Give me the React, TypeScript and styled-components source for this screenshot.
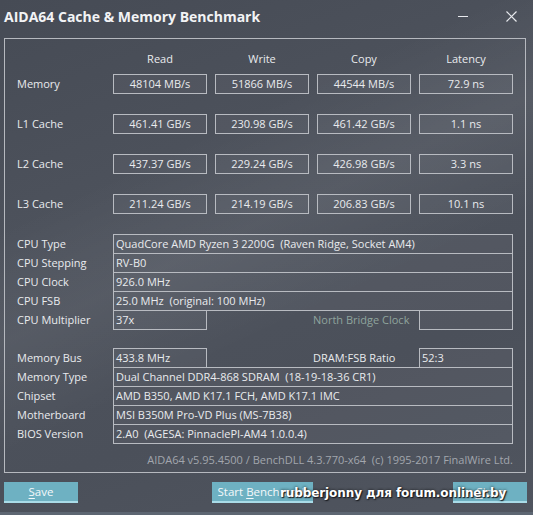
import styled, { createGlobalStyle } from 'styled-components';

const GlobalStyle = createGlobalStyle`
  html, body {
    margin: 0;
    padding: 0;
    background: #4b505a;
  }
  body {
    font-family: 'Open Sans', 'Noto Sans', sans-serif;
    font-size: 11px;
    color: #e9ebee;
  }
`;

const benchRows = [
  { label: 'Memory', values: ['48104 MB/s', '51866 MB/s', '44544 MB/s', '72.9 ns'] },
  { label: 'L1 Cache', values: ['461.41 GB/s', '230.98 GB/s', '461.42 GB/s', '1.1 ns'] },
  { label: 'L2 Cache', values: ['437.37 GB/s', '229.24 GB/s', '426.98 GB/s', '3.3 ns'] },
  { label: 'L3 Cache', values: ['211.24 GB/s', '214.19 GB/s', '206.83 GB/s', '10.1 ns'] },
];

export default function App() {
  return (
    <>
      <GlobalStyle />
      <Window>
        <TitleBar>
          <Title>AIDA64 Cache &amp; Memory Benchmark</Title>
          <WindowControls>
            <Minimize />
            <CloseIcon viewBox="0 0 11 11">
              <path d="M0.5 0.5 L10.5 10.5 M10.5 0.5 L0.5 10.5" stroke="#e8eaee" strokeWidth="1.2" />
            </CloseIcon>
          </WindowControls>
        </TitleBar>

        <Panel>
          <HeaderRow>
            <LabelCell />
            <HeaderCell>Read</HeaderCell>
            <HeaderCell>Write</HeaderCell>
            <HeaderCell>Copy</HeaderCell>
            <HeaderCell>Latency</HeaderCell>
          </HeaderRow>

          <BenchTable>
            {benchRows.map((row) => (
              <BenchRow key={row.label}>
                <LabelCell>{row.label}</LabelCell>
                {row.values.map((v, i) => (
                  <ValueBox key={i}>{v}</ValueBox>
                ))}
              </BenchRow>
            ))}
          </BenchTable>

          <InfoBlock $top={20}>
            <InfoRow>
              <LabelCell>CPU Type</LabelCell>
              <InfoCell>QuadCore AMD Ryzen 3 2200G&nbsp; (Raven Ridge, Socket AM4)</InfoCell>
            </InfoRow>
            <InfoRow>
              <LabelCell>CPU Stepping</LabelCell>
              <InfoCell>RV-B0</InfoCell>
            </InfoRow>
            <InfoRow>
              <LabelCell>CPU Clock</LabelCell>
              <InfoCell>926.0 MHz</InfoCell>
            </InfoRow>
            <InfoRow>
              <LabelCell>CPU FSB</LabelCell>
              <InfoCell>25.0 MHz&nbsp; (original: 100 MHz)</InfoCell>
            </InfoRow>
            <SplitRow>
              <LabelCell>CPU Multiplier</LabelCell>
              <SmallCell>37x</SmallCell>
              <MiddleLabel $dim>North Bridge Clock</MiddleLabel>
              <SmallCell />
            </SplitRow>
          </InfoBlock>

          <InfoBlock $top={18}>
            <SplitRow>
              <LabelCell>Memory Bus</LabelCell>
              <SmallCell>433.8 MHz</SmallCell>
              <MiddleLabel>DRAM:FSB Ratio</MiddleLabel>
              <SmallCell>52:3</SmallCell>
            </SplitRow>
            <InfoRow>
              <LabelCell>Memory Type</LabelCell>
              <InfoCell>Dual Channel DDR4-868 SDRAM&nbsp; (18-19-18-36 CR1)</InfoCell>
            </InfoRow>
            <InfoRow>
              <LabelCell>Chipset</LabelCell>
              <InfoCell>AMD B350, AMD K17.1 FCH, AMD K17.1 IMC</InfoCell>
            </InfoRow>
            <InfoRow>
              <LabelCell>Motherboard</LabelCell>
              <InfoCell>MSI B350M Pro-VD Plus (MS-7B38)</InfoCell>
            </InfoRow>
            <InfoRow>
              <LabelCell>BIOS Version</LabelCell>
              <InfoCell>2.A0&nbsp; (AGESA: PinnaclePI-AM4 1.0.0.4)</InfoCell>
            </InfoRow>
          </InfoBlock>

          <Footer>AIDA64 v5.95.4500 / BenchDLL 4.3.770-x64&nbsp; (c) 1995-2017 FinalWire Ltd.</Footer>
        </Panel>

        <ButtonBar>
          <Button $width={74}>
            <u>S</u>ave
          </Button>
          <Button $width={101} $offset={134}>
            Start <u>B</u>enchmark
          </Button>
          <Button $width={74} $push>
            <u>C</u>lose
          </Button>
          <Watermark>rubberjonny для forum.onliner.by</Watermark>
        </ButtonBar>

        <BottomStrip />
      </Window>
    </>
  );
}

const Window = styled.div`
  position: relative;
  width: 533px;
  height: 515px;
  overflow: hidden;
  display: flex;
  flex-direction: column;
  background:
    linear-gradient(155deg, rgba(255, 255, 255, 0) 30%, rgba(255, 255, 255, 0.05) 45%, rgba(255, 255, 255, 0) 60%),
    linear-gradient(160deg, #464b55 0%, #4e535d 40%, #4b505a 70%, #50555f 100%);
`;

const TitleBar = styled.div`
  height: 38px;
  display: flex;
  align-items: flex-start;
  justify-content: space-between;
  padding: 8px 16px 0 4px;
  box-sizing: border-box;
`;

const Title = styled.div`
  font-size: 14px;
  font-weight: 700;
  color: #f2f3f5;
  line-height: 18px;
`;

const WindowControls = styled.div`
  display: flex;
  align-items: center;
  gap: 38px;
  height: 12px;
  margin-top: 2px;
`;

const Minimize = styled.div`
  width: 10px;
  height: 1px;
  background: #e8eaee;
`;

const CloseIcon = styled.svg`
  width: 11px;
  height: 11px;
`;

const Panel = styled.div`
  margin: 0 7px 0 4px;
  border: 1px solid #b6b9bf;
  padding: 0 0 4px 12px;
  display: flex;
  flex-direction: column;
`;

const HeaderRow = styled.div`
  display: flex;
  gap: 8px;
  height: 35px;
  padding-top: 12px;
  box-sizing: border-box;
  line-height: 16px;
`;

const LabelCell = styled.div`
  width: 88px;
  flex: none;
  line-height: 18px;
  white-space: nowrap;
`;

const HeaderCell = styled.div`
  width: 94px;
  text-align: center;
`;

const BenchTable = styled.div`
  display: flex;
  flex-direction: column;
  gap: 20px;
`;

const BenchRow = styled.div`
  display: flex;
  gap: 8px;
  height: 20px;
  align-items: center;
`;

const ValueBox = styled.div`
  width: 94px;
  height: 20px;
  box-sizing: border-box;
  border: 1px solid #b8bbc1;
  background: rgba(255, 255, 255, 0.04);
  text-align: center;
  line-height: 17px;
`;

const InfoBlock = styled.div<{ $top: number }>`
  margin-top: ${({ $top }) => $top}px;
  display: flex;
  flex-direction: column;
`;

const InfoRow = styled.div`
  display: flex;
  gap: 8px;
  height: 20px;
  align-items: center;
  & + & {
    margin-top: -1px;
  }
`;

const SplitRow = styled(InfoRow)`
  gap: 0;
  & > ${LabelCell} {
    margin-right: 8px;
  }
  & + ${InfoRow} {
    margin-top: -1px;
  }
  ${InfoRow} + & {
    margin-top: -1px;
  }
`;

const InfoCell = styled.div`
  width: 400px;
  height: 20px;
  box-sizing: border-box;
  border: 1px solid #b8bbc1;
  background: rgba(255, 255, 255, 0.04);
  padding-left: 2px;
  line-height: 17px;
  white-space: nowrap;
`;

const SmallCell = styled(InfoCell)`
  width: 94px;
`;

const MiddleLabel = styled.div<{ $dim?: boolean }>`
  width: 212px;
  padding-left: 106px;
  box-sizing: border-box;
  line-height: 18px;
  color: ${({ $dim }) => ($dim ? '#8fa49d' : '#e9ebee')};
  white-space: nowrap;
`;

const Footer = styled.div`
  margin-top: 8px;
  width: 496px;
  text-align: right;
  line-height: 16px;
  color: #a2a6ad;
  white-space: nowrap;
`;

const ButtonBar = styled.div`
  position: relative;
  display: flex;
  margin-top: 9px;
  padding-left: 4px;
  padding-right: 6px;
  height: 21px;
`;

const Button = styled.div<{ $width: number; $offset?: number; $push?: boolean }>`
  width: ${({ $width }) => $width}px;
  height: 21px;
  box-sizing: border-box;
  margin-left: ${({ $offset, $push }) => ($push ? 'auto' : `${$offset ?? 0}px`)};
  background: #6eb1c2;
  border-bottom: 2px solid #a9dce8;
  color: #f4f8fa;
  font-size: 11.5px;
  line-height: 19px;
  text-align: center;
  white-space: nowrap;
  overflow: hidden;

  & u {
    text-decoration-thickness: 1px;
    text-underline-offset: 2px;
  }
`;

const Watermark = styled.div`
  position: absolute;
  left: 280px;
  top: 2px;
  font-family: 'DejaVu Sans', Verdana, sans-serif;
  font-weight: 700;
  font-size: 12px;
  letter-spacing: -0.1px;
  color: #ffffff;
  text-shadow: 1px 1px 1px #1a1c20, 0 0 3px rgba(0, 0, 0, 0.8);
  white-space: nowrap;
  line-height: 18px;
`;

const BottomStrip = styled.div`
  margin-top: auto;
  height: 3px;
  background: #5d6672;
`;
